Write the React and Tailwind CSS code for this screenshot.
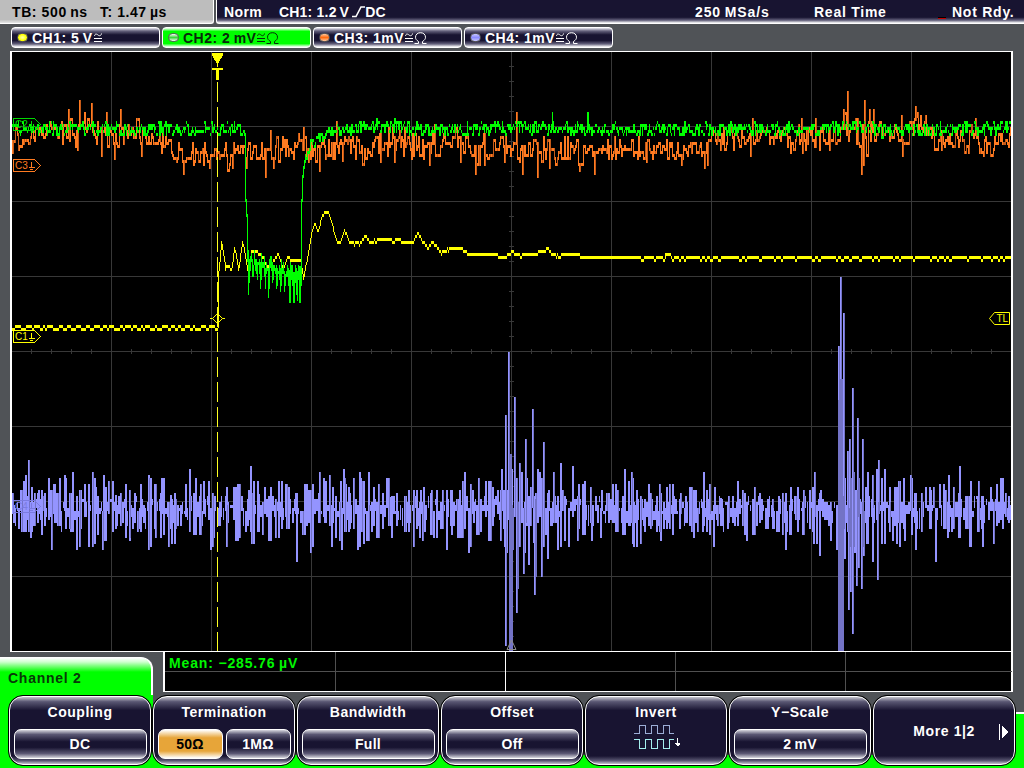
// Oscilloscope front panel: status bar, channel chips, trace area, soft keys

const TOP = 52;
const BOTTOM = 651;
const LEFT = 12;
const RIGHT = 1011;

// CH4 turning points, as x,y pairs
const CH4_PEAKS = '12,493 20,490 23,481 25,475 28,460 31,487 34,493 38,490 42,496 48,478 50,490 53,484 56,493 59,478 64,475 69,493 72,472 79,490 84,484 92,472 95,487 103,475 105,487 108,481 115,495 120,493 125,484 129,490 134,493 140,484 148,475 150,478 154,484 161,478 170,495 174,493 185,484 189,469 195,478 200,484 203,481 208,481 212,493 226,487 233,487 237,484 248,490 250,466 253,481 258,494 264,487 270,487 278,481 285,484 288,487 295,493 304,484 308,490 312,484 319,472 323,478 325,481 329,475 332,487 340,481 343,469 345,484 348,487 353,478 359,472 361,481 368,472 373,487 378,484 382,493 386,478 390,497 404,496 408,490 413,490 416,490 420,490 423,487 431,490 436,490 442,490 450,490 456,499 459,490 462,481 464,472 470,484 472,490 478,478 485,481 490,481 492,487 497,490 501,469 503,490 505,415 508,352 509,454 511,469 514,397 519,463 521,472 525,439 527,496 530,487 532,409 537,469 539,472 543,442 548,490 553,472 560,463 562,490 572,466 578,484 584,481 590,487 601,490 606,493 612,484 617,490 624,469 628,481 631,472 636,490 641,499 648,484 650,493 656,496 659,484 666,487 669,484 675,499 680,493 685,496 689,487 692,490 695,490 703,472 706,490 709,484 714,487 720,498 728,496 732,496 737,481 742,490 754,487 759,493 767,499 772,499 778,496 790,487 795,496 797,487 803,490 809,490 812,487 814,472 820,490 830,502 838,346 840,277 841,379 843,313 847,451 849,439 852,388 853,472 855,490 857,418 862,439 865,487 867,472 872,475 876,469 878,460 884,469 889,487 894,487 898,481 903,478 910,475 914,493 925,487 930,490 933,487 939,484 945,490 948,475 953,487 959,466 967,496 970,481 978,481 981,496 990,487 996,484 1000,478 1005,493 1008,496';
const CH4_TROUGHS = '13,523 18,529 21,532 25,532 30,538 33,526 37,523 41,535 44,526 51,550 54,523 57,526 65,529 70,532 76,550 80,529 88,547 94,544 97,535 102,550 104,541 112,532 116,526 122,523 125,538 129,541 132,529 137,532 143,523 148,550 150,529 155,538 160,538 163,535 168,547 171,544 175,529 180,526 189,532 193,535 199,535 210,550 213,538 219,526 226,547 235,541 239,538 247,526 251,544 257,532 262,535 268,541 275,538 281,529 286,529 296,562 302,535 306,526 310,553 312,541 318,523 324,523 331,547 335,538 339,541 341,550 344,532 349,529 357,550 360,532 363,544 366,541 368,541 371,532 376,538 382,529 388,526 391,538 396,526 405,532 413,547 419,538 422,541 424,532 430,535 433,538 440,529 446,550 451,535 457,538 460,538 464,529 468,553 473,523 476,535 480,532 488,541 493,517 500,541 504,547 505,646 506,553 510,651 511,651 512,550 516,613 517,589 523,574 524,553 526,526 528,565 533,543 534,595 535,577 541,577 545,535 547,559 554,523 557,550 564,541 568,547 577,541 582,535 591,541 600,538 608,523 615,532 622,535 632,544 633,547 640,544 644,532 651,526 656,532 660,541 663,529 672,535 679,529 685,523 691,532 693,538 697,532 702,532 709,535 713,547 717,526 721,526 727,529 734,526 744,535 746,541 752,535 765,529 772,529 776,532 782,535 785,550 789,535 797,529 802,535 813,544 816,544 819,556 830,541 836,550 839,651 842,651 844,559 848,610 850,592 852,634 854,553 856,586 858,568 861,589 863,556 866,544 872,562 877,580 881,544 889,532 892,541 896,544 899,547 904,541 911,535 915,550 921,532 929,529 935,562 943,529 947,538 951,532 958,538 965,529 969,547 977,532 982,547 993,544 1002,529 1009,520';

// CH3 noise band: x, upper, lower
const CH3_BAND = [
  [12, 122, 156], [24, 130, 150], [38, 122, 142], [52, 111, 138], [64, 114, 148], [72, 110, 152], [95, 110, 142], [104, 124, 158],
  [125, 116, 152], [150, 122, 152], [166, 132, 160], [178, 142, 170], [200, 138, 168], [245, 138, 170], [290, 134, 166],
  [312, 130, 166], [340, 128, 164], [365, 130, 166], [400, 123, 160], [430, 126, 165], [445, 126, 154], [470, 130, 166],
  [500, 136, 168], [512, 120, 168], [520, 132, 172], [560, 134, 168], [590, 138, 170], [610, 134, 162], [660, 134, 162],
  [706, 132, 164], [712, 122, 146], [745, 122, 154], [760, 124, 142], [795, 124, 154], [835, 122, 146], [843, 110, 142],
  [853, 118, 142], [858, 110, 160], [866, 112, 164], [870, 116, 140], [874, 114, 160], [880, 118, 146], [900, 120, 150],
  [915, 112, 136], [925, 116, 134], [930, 128, 152], [960, 124, 152], [985, 128, 158], [1011, 128, 150],
];
const CH3_SPIKES = {
  12: 154, 68: 109, 79: 100, 91: 103, 106: 112, 120: 109, 77: 151, 101: 157, 114: 160, 141: 157, 159: 121, 183: 175, 209: 169,
  232: 169, 246: 169, 265: 178, 270: 130, 273: 169, 303: 127, 319: 172, 336: 121, 342: 162, 380: 163, 394: 163, 429: 166,
  434: 124, 460: 163, 475: 175, 484: 166, 516: 112, 522: 175, 537: 178, 549: 169, 579: 172, 594: 175, 646: 163, 681: 166,
  704: 169, 707: 166, 720: 151, 750: 157, 752: 118, 801: 118, 802: 154, 829: 151, 815: 118, 843: 109, 847: 91, 861: 175,
  864: 100, 863: 166, 869: 109, 873: 109, 901: 115, 902: 157, 915: 106, 917: 112, 941: 151, 968: 154, 975: 118, 983: 157, 992: 157,
};

const CH1_POINTS = [
  [217, 329], [218, 272], [220, 252], [221, 243], [225, 268], [228, 266], [231, 270], [234, 247], [238, 270], [242, 241],
  [247, 268], [251, 252], [256, 251], [263, 258], [267, 266], [272, 262], [278, 254], [283, 270], [287, 257], [292, 261],
  [300, 261], [303, 277], [307, 258], [310, 238], [314, 224], [318, 231], [321, 218], [324, 212], [329, 214], [332, 224],
  [334, 234], [337, 242], [340, 243], [344, 230], [349, 242], [359, 244], [365, 236], [370, 242], [380, 239], [413, 242],
  [417, 233], [427, 248], [432, 242], [441, 253], [452, 247], [461, 249], [468, 254], [498, 255], [504, 258], [512, 252],
  [520, 256], [534, 254], [547, 249], [556, 256], [570, 253], [585, 257], [605, 257], [640, 259], [668, 255], [680, 258], [1011, 259],
];

const CH2_POINTS = [
  [12, 128], [60, 129], [130, 130], [243, 129], [244, 134], [245, 199], [246, 214], [247, 260], [300, 285], [301, 200],
  [302, 175], [303, 166], [305, 156], [308, 147], [314, 141], [322, 138], [333, 132], [345, 129], [380, 125], [420, 130],
  [500, 129], [560, 127], [600, 130], [820, 129], [860, 127], [885, 131], [1011, 128],
];

function makeRandom(seed) {
  let s = seed;
  return () => {
    s = (s * 1664525 + 1013904223) % 4294967296;
    return s / 4294967296;
  };
}

// ADC levels are three pixels apart
const snap = y => Math.round((y - 52) / 3) * 3 + 52;

function interpolate(points, x, col = 1) {
  for (let i = 1; i < points.length; i++) {
    if (x <= points[i][0]) {
      const a = points[i - 1];
      const b = points[i];
      return a[col] + ((b[col] - a[col]) * (x - a[0])) / (b[0] - a[0]);
    }
  }
  return points[points.length - 1][col];
}

function column(x, a, b, w = 1) {
  const lo = Math.max(Math.min(a, b), TOP);
  const hi = Math.min(Math.max(a, b) + 3, BOTTOM);
  return `M${x} ${lo}h${w}V${hi}h-${w}z`;
}

function buildCh1() {
  const rnd = makeRandom(7);
  let d = '';
  let prev = 325;
  let hold = 0;
  let offset = 0;
  for (let x = LEFT; x < RIGHT; x++) {
    if (hold-- <= 0) {
      offset = offset ? 0 : 3;
      hold = x < 217 ? 1 + Math.floor(rnd() * 5) : offset ? 1 + Math.floor(rnd() * 2) : 2 + Math.floor(rnd() * rnd() * 18);
    }
    let y;
    if (x < 217) y = 325 + offset;
    else if (x > 600) y = 256 + (x < 640 && offset ? 0 : offset) - (x > 664 && x < 671 ? 3 : 0);
    else y = snap(interpolate(CH1_POINTS, x) - 1.5 + (x > 340 ? offset / 3 : 0));
    const gap = Math.abs(y - prev);
    d += gap > 3 ? column(x, y, prev + (y > prev ? 3 : -3)) : column(x, y, y);
    prev = y;
  }
  return d;
}

function buildCh2() {
  const rnd = makeRandom(21);
  let d = '';
  let prev = 127;
  for (let x = LEFT; x < RIGHT; x++) {
    if (x > 247 && x < 300) {
      const t = (x - 247) / 53;
      const top = 248 + t * 17 + rnd() * 16;
      const low = x % 4 < 2 ? 268 + t * 16 + rnd() * 14 : 258 + t * 14 + rnd() * 12;
      d += column(x, snap(top), snap(low));
      prev = snap(low);
      continue;
    }
    const quiet = x > 243 && x < 306;
    const spread = quiet ? 0 : 12;
    const y = snap(interpolate(CH2_POINTS, x) - 1.5 + (rnd() - 0.5) * spread);
    d += column(x, y, rnd() > 0.4 || quiet ? prev : y);
    prev = y;
  }
  d += column(248, 260, 292) + column(268, 270, 295) + column(289, 270, 300, 2) + column(293, 272, 300, 2) + column(299, 266, 300, 2);
  d += column(552, 112, 127) + column(587, 112, 127, 2) + column(234, 121, 127) + column(502, 121, 130);
  return d;
}

function buildCh3() {
  const rnd = makeRandom(99);
  let light = '';
  let dark = '';
  let prev = 140;
  let y = 140;
  for (let x = LEFT; x < RIGHT; x++) {
    const top = interpolate(CH3_BAND, x, 1);
    const low = interpolate(CH3_BAND, x, 2);
    if (rnd() > 0.35) {
      const r = rnd() * 0.7 + rnd() * 0.3;
      y = snap(top + (low - top) * r - 1);
    }
    if (CH3_SPIKES[x]) {
      const end = CH3_SPIKES[x] > 140 ? CH3_SPIKES[x] - 3 : CH3_SPIKES[x];
      light += column(x, end, prev);
      dark += column(x + 1, end, prev);
      continue;
    }
    if (rnd() > 0.85) dark += column(x, y, prev);
    else light += column(x, y, prev);
    prev = y;
  }
  return { light, dark };
}

function buildCh4() {
  const rnd = makeRandom(5);
  const parse = (s, kind) => s.split(' ').map(p => [...p.split(',').map(Number), kind]);
  const points = [...parse(CH4_PEAKS, 'peak'), ...parse(CH4_TROUGHS, 'trough')].sort((a, b) => a[0] - b[0]);
  let light = '';
  let dark = '';
  let used = LEFT - 1;
  let last = null;
  points.forEach(([x, y, kind], i) => {
    // short ripple where two turning points are far apart
    for (let fx = used + 1; fx < x; fx += 2) {
      const a = 495 + rnd() * 16;
      light += column(fx, snap(a), snap(a + rnd() * 20), Math.min(x - fx, 1 + Math.round(rnd())));
    }
    const big = y < 455 || y > 565;
    const near = last && last[2] !== kind && x - last[0] < 5;
    let inner = kind === 'peak' ? 505 + rnd() * 24 : 491 + rnd() * 20;
    if (near && rnd() > 0.5) inner = kind === 'peak' ? Math.min(last[1] - 3, 545) : Math.max(last[1], 478);
    const end = kind === 'peak' ? y : y - 3;
    light += column(x, end, snap(inner), 2);
    if (big || i % 4 === 0) dark += column(x + 1, end, snap(inner));
    used = x + 1;
    last = [x, y, kind];
  });
  // ringing bursts run off the bottom of the screen
  dark += column(509, 454, 648, 3) + column(838, 400, 648, 2) + column(841, 400, 648, 2) + column(840, 379, 630);
  return { light, dark };
}

const ch1 = buildCh1();
const ch2 = buildCh2();
const ch3 = buildCh3();
const ch4 = buildCh4();

const gridX = Array.from({ length: 9 }, (_, i) => 111 + i * 100);
const gridY = Array.from({ length: 7 }, (_, i) => 126 + i * 75);
const tickX = Array.from({ length: 49 }, (_, i) => 31 + i * 20);
const tickY = Array.from({ length: 39 }, (_, i) => 66 + i * 15);

function GroundTag({ name, y, color }) {
  return (
    <g transform={`translate(13 ${y})`} stroke={color} fill="none">
      <path d="M.5 .5H21.5L27.5 6.5L21.5 12.5H.5z" shapeRendering="crispEdges" />
      <path d="M18.5 3V8M16 8.5H22M17 10.5H20" shapeRendering="crispEdges" />
      <text x="2" y="10" fontSize="10" fontWeight="400" stroke="none" fill={color}>{name}</text>
    </g>
  );
}

function Screen() {
  return (
    <svg className="block" width="999" height="599" viewBox="12 52 999 599">
      <g shapeRendering="crispEdges">
        <g fill="#383838">
          {gridX.map(x => <rect key={x} x={x} y={TOP} width="1" height="599" />)}
          {gridY.map(y => <rect key={y} x={LEFT} y={y} width="999" height="1" />)}
          {tickX.map(x => <rect key={x} x={x} y="349" width="1" height="5" />)}
          {tickY.map(y => <rect key={y} x="509" y={y} width="5" height="1" />)}
        </g>
        <path d={ch4.light} fill="#9494ff" />
        <path d={ch4.dark} fill="#7373c6" />
        <path d={ch3.light} fill="#ff7b21" />
        <path d={ch3.dark} fill="#c65a18" />
        <path d={ch1} fill="#ffff00" />
        <path d={ch2} fill="#00ff00" />

        {/* Trigger position and level */}
        <path d="M212 53H223V55L218 64V67H217V64L212 55z" fill="#ffff00" />
        <path d="M212 68H223V70H219V80H216V70H212z" fill="#ffff00" />
        <path d="M217.5 82V651" stroke="#ffff21" strokeDasharray="20 5" />
      </g>
      <g fill="none" stroke="#ffff00">
        <path d="M210 318.5H212.5L217.5 313.5L222.5 318.5L217.5 323.5L212.5 318.5M222.5 318.5H225" />
        <path d="M1009.5 312.5H994.5L989.5 318.5L994.5 324.5H1009.5z" />
      </g>
      <text x="996.5" y="322" fontSize="10" fontWeight="400" fill="#ffff00">TL</text>
      <path d="M511.5 640L516 649.5H507z" fill="none" stroke="#8c8c8c" />

      <GroundTag name="C2" y={118} color="#00d800" />
      <GroundTag name="C3" y={159} color="#ff7b21" />
      <GroundTag name="C1" y={330} color="#ffff00" />
      <GroundTag name="C4" y={500} color="#7b7be0" />
    </svg>
  );
}

function Ohm() {
  return (
    <svg className="block" width="13" height="12" viewBox="0 0 13 12" fill="none" stroke="currentColor">
      <path d="M.5 11.5H4.5V9.5C2.3 8 1.5 7 1.5 5.2C1.5 2.5 3.6 .7 6.5 .7S11.5 2.5 11.5 5.2C11.5 7 10.7 8 8.5 9.5V11.5H12.5" />
    </svg>
  );
}

function Coupled() {
  return (
    <svg className="block" width="8" height="9" viewBox="0 0 8 9" fill="none" stroke="currentColor">
      <path d="M.5 3C1 .5 2.5 .8 4 2S7 3 7.5 .5M0 5.5H8M0 8.5H8" />
    </svg>
  );
}

const CHANNELS = [
  { name: 'CH1: 5\u2009V', dot: 'bg-[radial-gradient(ellipse,#ffff9c_10%,#ffff00_60%)]', active: false, ohm: false },
  { name: 'CH2: 2\u2009mV', dot: 'bg-[linear-gradient(#f7fff7,#39d639_50%,#f7fff7)]', active: true, ohm: true },
  { name: 'CH3: 1mV', dot: 'bg-[linear-gradient(#ffc69c,#ff6b10_50%,#ffc69c)]', active: false, ohm: true },
  { name: 'CH4: 1mV', dot: 'bg-[linear-gradient(#c6c6ff,#8c8cff_50%,#c6c6ff)]', active: false, ohm: true },
];

function ChannelChip({ channel }) {
  const look = channel.active
    ? 'bg-[linear-gradient(#ffffff_0%,#00ff00_18%,#00ff00_82%,#ffffff_100%)] text-[#08280a]'
    : 'bg-[linear-gradient(#e7e7ef_0%,#63607b_16%,#181431_36%,#181431_66%,#63607b_84%,#ffffff_100%)] text-white';
  return (
    <div className={`flex h-[21px] w-[149px] items-center rounded-[4px] border border-white pl-[5px] ${look}`}>
      <span className={`h-[9px] w-[11px] rounded-full border border-[#5a5a5a] ${channel.dot}`} />
      <span className="ml-[4px] whitespace-pre text-[14px] leading-none tracking-[0.5px]">{channel.name}</span>
      <span className="ml-[1px] flex items-center gap-[1px]">
        <Coupled />
        {channel.ohm && <Ohm />}
      </span>
    </div>
  );
}

function SoftKey({ title, children }) {
  return (
    <div className="h-[71px] w-[144px] shrink-0 rounded-[15px] border border-black bg-black">
      <div className="flex h-full w-full flex-col items-center rounded-[14px] border-[1.5px] border-white bg-[linear-gradient(#c6c6ce_0%,#5a5773_7%,#181431_20%,#181431_88%,#5a5773_95%,#c6c6ce_100%)] text-white">
        {title && <div className="mt-[7px] text-[14px] leading-[16px] tracking-[0.55px]">{title}</div>}
        {children}
      </div>
    </div>
  );
}

function Value({ children, width = 'w-[133px]', selected = false }) {
  const look = selected
    ? 'bg-[linear-gradient(#ffffff_0%,#e7a539_28%,#e7a539_75%,#ffffff_100%)] text-black'
    : 'bg-[linear-gradient(#d6d6de_0%,#5a5773_16%,#181431_42%,#181431_62%,#5a5773_84%,#d6d6de_100%)] text-white';
  return (
    <div className={`flex h-[30px] items-center justify-center whitespace-pre rounded-[7px] border-[1.5px] border-white text-[14px] tracking-[0.3px] ${width} ${look}`}>
      {children}
    </div>
  );
}

function InvertIcon() {
  return (
    <svg className="mt-[4px] ml-[3px] block" width="48" height="26" viewBox="0 0 48 26" fill="none" shapeRendering="crispEdges">
      <path d="M0 9.5H5.5V1.5H11.5V9.5H17.5V1.5H23.5V9.5H29.5V1.5H35.5V9.5H40" stroke="#9cadd6" />
      <path d="M0 15.5H5.5V24.5H11.5V15.5H17.5V24.5H23.5V15.5H29.5V24.5H35.5V15.5H40" stroke="#a5efef" />
      <path d="M43.5 14V22" stroke="#ffffff" />
      <path d="M41 19H46V20L44 22H43L41 20z" fill="#ffffff" />
    </svg>
  );
}

export default function App() {
  return (
    <div className="flex h-[768px] w-[1024px] flex-col overflow-hidden bg-[#505357] font-['Liberation_Sans',Arial,sans-serif] font-bold text-white">
      {/* Status bar */}
      <div className="flex h-[24px] gap-[2px] text-[14px] leading-[25px]">
        <div className="flex w-[214px] rounded-br-[3px] border-b border-r border-white bg-[linear-gradient(#bdbdbd_85%,#e7e7e7)] pl-[12px] text-black">
          <span className="w-[88px] whitespace-pre tracking-[0.6px]">{'TB: 500\u2009ns'}</span>
          <span className="whitespace-pre tracking-[0.55px]">{'T: 1.47\u2009µs'}</span>
        </div>
        <div className="flex flex-1 rounded-bl-[3px] border-b-[1.5px] border-l border-white bg-[linear-gradient(#181431_75%,#63607b_88%,#ffffff)] pl-[7px]">
          <span className="w-[55px] tracking-[0.4px]">Norm</span>
          <span className="flex w-[416px] whitespace-pre tracking-[0.2px]">
            {'CH1: 1.2\u2009V'}
            <svg className="ml-[3px] mt-[6px]" width="13" height="12" viewBox="0 0 13 12" fill="none" stroke="white" strokeWidth="1.6">
              <path d="M0 10.5H4L9 1H13" />
            </svg>
            DC
          </span>
          <span className="w-[119px] whitespace-pre tracking-[0.9px]">{'250\u2009MSa/s'}</span>
          <span className="w-[124px] tracking-[0.75px]">Real Time</span>
          <span className="mt-[17px] h-[2px] w-[8px] border-b border-[#c60000] bg-black" />
          <span className="ml-[6px] whitespace-nowrap tracking-[0.75px]">Not Rdy.</span>
        </div>
      </div>

      {/* Channel chips */}
      <div className="flex h-[27px] gap-[2px] pl-[11px] pt-[3px]">
        {CHANNELS.map(c => <ChannelChip key={c.name} channel={c} />)}
      </div>

      {/* Traces */}
      <div className="ml-[10px] h-[601px] w-[1003px] border-x-2 border-y border-white bg-black">
        <Screen />
      </div>

      {/* Menu tab and measurements */}
      <div className="flex h-[43px]">
        <div className="mt-[5px] h-[38px] w-[153px] rounded-tr-[12px] border-r-2 border-t border-white bg-[linear-gradient(#ffffff_0px,#d0ffd0_4px,#00ff00_14px)] pl-[8px] pt-[12px] text-[14px] leading-[16px] tracking-[0.75px] text-[#083808]">
          Channel 2
        </div>
        <div className="ml-[10px] flex h-[40px] w-[850px] border-b border-l-2 border-r-2 border-white bg-black">
          {[0, 1, 2, 3, 4].map(i => (
            <div
              key={i}
              className={`flex shrink-0 flex-col ${i === 4 ? 'w-[166px]' : 'border-r'} ${i === 0 ? 'w-[171px]' : ''} ${i > 0 && i < 4 ? 'w-[170px]' : ''} ${i === 1 ? 'border-white' : 'border-[#505050]'}`}
            >
              <div className="h-[20px] whitespace-pre border-b border-[#505050] pl-[4px] text-[14px] leading-[22px] tracking-[0.85px] text-[#00f700]">
                {i === 0 && 'Mean: −285.76\u2009µV'}
              </div>
            </div>
          ))}
        </div>
      </div>

      {/* Soft keys */}
      <div className="grid h-[73px]">
        <div className="flex [grid-area:1/1]">
          <div className="w-[153px] bg-[#00ff00]" />
          <div className="h-[13px] flex-1 self-end bg-[#00ff00]" />
          <div className="mt-[17px] w-[9px] border-t-2 border-white bg-[#00ff00]" />
        </div>
        <div className="flex pl-[8px] [grid-area:1/1]">
          <SoftKey title="Coupling">
            <div className="mt-[9px]"><Value>DC</Value></div>
          </SoftKey>
          <SoftKey title="Termination">
            <div className="mt-[9px] flex gap-[3px]">
              <Value width="w-[65px]" selected>50Ω</Value>
              <Value width="w-[65px]">1MΩ</Value>
            </div>
          </SoftKey>
          <SoftKey title="Bandwidth">
            <div className="mt-[9px]"><Value>Full</Value></div>
          </SoftKey>
          <SoftKey title="Offset">
            <div className="mt-[9px]"><Value>Off</Value></div>
          </SoftKey>
          <SoftKey title="Invert">
            <InvertIcon />
          </SoftKey>
          <SoftKey title="Y−Scale">
            <div className="mt-[9px]"><Value>{'2\u2009mV'}</Value></div>
          </SoftKey>
          <SoftKey>
            <div className="flex h-full w-full items-center justify-end gap-[24px] pr-[5px] pt-[2px] text-[14px] tracking-[0.6px]">
              <span>More 1|2</span>
              <svg className="block" width="10" height="16" viewBox="0 0 10 16" shapeRendering="crispEdges">
                <path d="M0 0H1V16H0z M3 2L9 8L3 14z" fill="white" />
              </svg>
            </div>
          </SoftKey>
        </div>
      </div>
    </div>
  );
}
